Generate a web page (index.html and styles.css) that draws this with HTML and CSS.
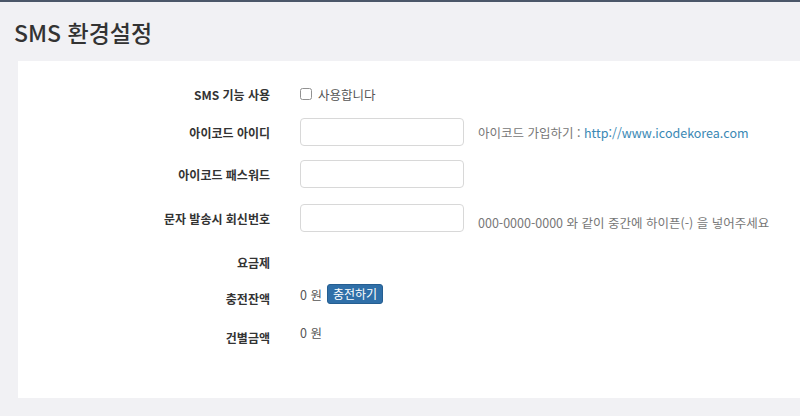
FILE: index.html
```html
<!DOCTYPE html>
<html lang="ko">
<head>
    <meta charset="UTF-8">
    <meta name="viewport" content="width=device-width, initial-scale=1.0">
    <title>SMS 환경설정</title>
    <link rel="stylesheet" href="styles.css">
</head>
<body>

    <h1 class="page-title">SMS 환경설정</h1>

    <div class="panel">
        <form class="settings">
            <div class="row row-check">
                <label class="label">SMS 기능 사용</label>
                <div class="field">
                    <label class="check"><input type="checkbox"> 사용합니다</label>
                </div>
            </div>
            <div class="row">
                <label class="label" for="icodeId">아이코드 아이디</label>
                <div class="field">
                    <input type="text" id="icodeId" class="text-input">
                    <span class="help">아이코드 가입하기 : <a href="#">http://www.icodekorea.com</a></span>
                </div>
            </div>
            <div class="row">
                <label class="label" for="icodePw">아이코드 패스워드</label>
                <div class="field">
                    <input type="password" id="icodePw" class="text-input">
                </div>
            </div>
            <div class="row row-phone">
                <label class="label" for="callback">문자 발송시 회신번호</label>
                <div class="field">
                    <input type="text" id="callback" class="text-input">
                    <span class="help help-low">000-0000-0000 와 같이 중간에 하이픈(-) 을 넣어주세요</span>
                </div>
            </div>
            <div class="row row-plain">
                <label class="label">요금제</label>
                <div class="field"></div>
            </div>
            <div class="row row-static row-balance">
                <label class="label">충전잔액</label>
                <div class="field">
                    <span class="value">0 원</span>
                    <button type="button" class="btn-charge">충전하기</button>
                </div>
            </div>
            <div class="row row-static row-unit">
                <label class="label">건별금액</label>
                <div class="field">
                    <span class="value">0 원</span>
                </div>
            </div>
        </form>
    </div>

</body>
</html>
```

FILE: styles.css
```css
body {
    font-family: "Noto Sans CJK KR", "Noto Sans", sans-serif;
    margin: 0;
    padding: 0;
    background-color: #f1f1f4;
    color: #333;
    border-top: 2px solid #4b5769;
    height: 414px;
    overflow: hidden;
}
.page-title {
    margin: 0;
    padding: 15px 14px 0;
    height: 44px;
    font-size: 23px;
    font-weight: 500;
    line-height: 30px;
    color: #333;
}
.panel {
    margin-left: 18px;
    background: white;
    height: 337px;
    padding-top: 22px;
    box-sizing: border-box;
}
.settings {
    display: flex;
    flex-direction: column;
    gap: 14px;
}
.row {
    display: grid;
    grid-template-columns: 252px 1fr;
    column-gap: 30px;
    align-items: center;
    min-height: 28px;
}
.row-check {
    min-height: 22px;
    margin-bottom: -1px;
}
.row-phone {
    margin-top: 2px;
}
.row-plain {
    margin-top: 5px;
    min-height: 22px;
}
.row-static {
    align-items: start;
    min-height: 26px;
}
.row-balance {
    margin-top: -3px;
}
.row-unit {
    margin-top: -1px;
}
.label {
    text-align: right;
    font-size: 12px;
    font-weight: bold;
    color: #333;
}
.row-static .label {
    padding-top: 6px;
}
.field {
    display: flex;
    align-items: center;
    gap: 14px;
    font-size: 12px;
}
.check {
    display: flex;
    align-items: center;
    gap: 6px;
    color: #555;
    font-size: 12.5px;
}
.check input {
    width: 12px;
    height: 12px;
    margin: 0;
    accent-color: #999;
    opacity: 0.8;
}
.text-input {
    width: 164px;
    height: 28px;
    box-sizing: border-box;
    border: 1px solid #d8d8d8;
    border-radius: 4px;
    padding: 4px 8px;
    font-size: 12px;
}
.help {
    color: #777;
    font-size: 12.5px;
}
.help a {
    color: #3a88b4;
    text-decoration: none;
}
.help-low {
    padding-top: 8px;
}
.row-static .field {
    gap: 5px;
}
.value {
    color: #555;
    font-size: 12.5px;
}
.btn-charge {
    padding: 1px 5px;
    height: 20px;
    background: #2f6fa8;
    color: white;
    border: 1px solid #255e91;
    border-radius: 3px;
    font-family: inherit;
    font-size: 12px;
    line-height: 16px;
    cursor: pointer;
}
```
